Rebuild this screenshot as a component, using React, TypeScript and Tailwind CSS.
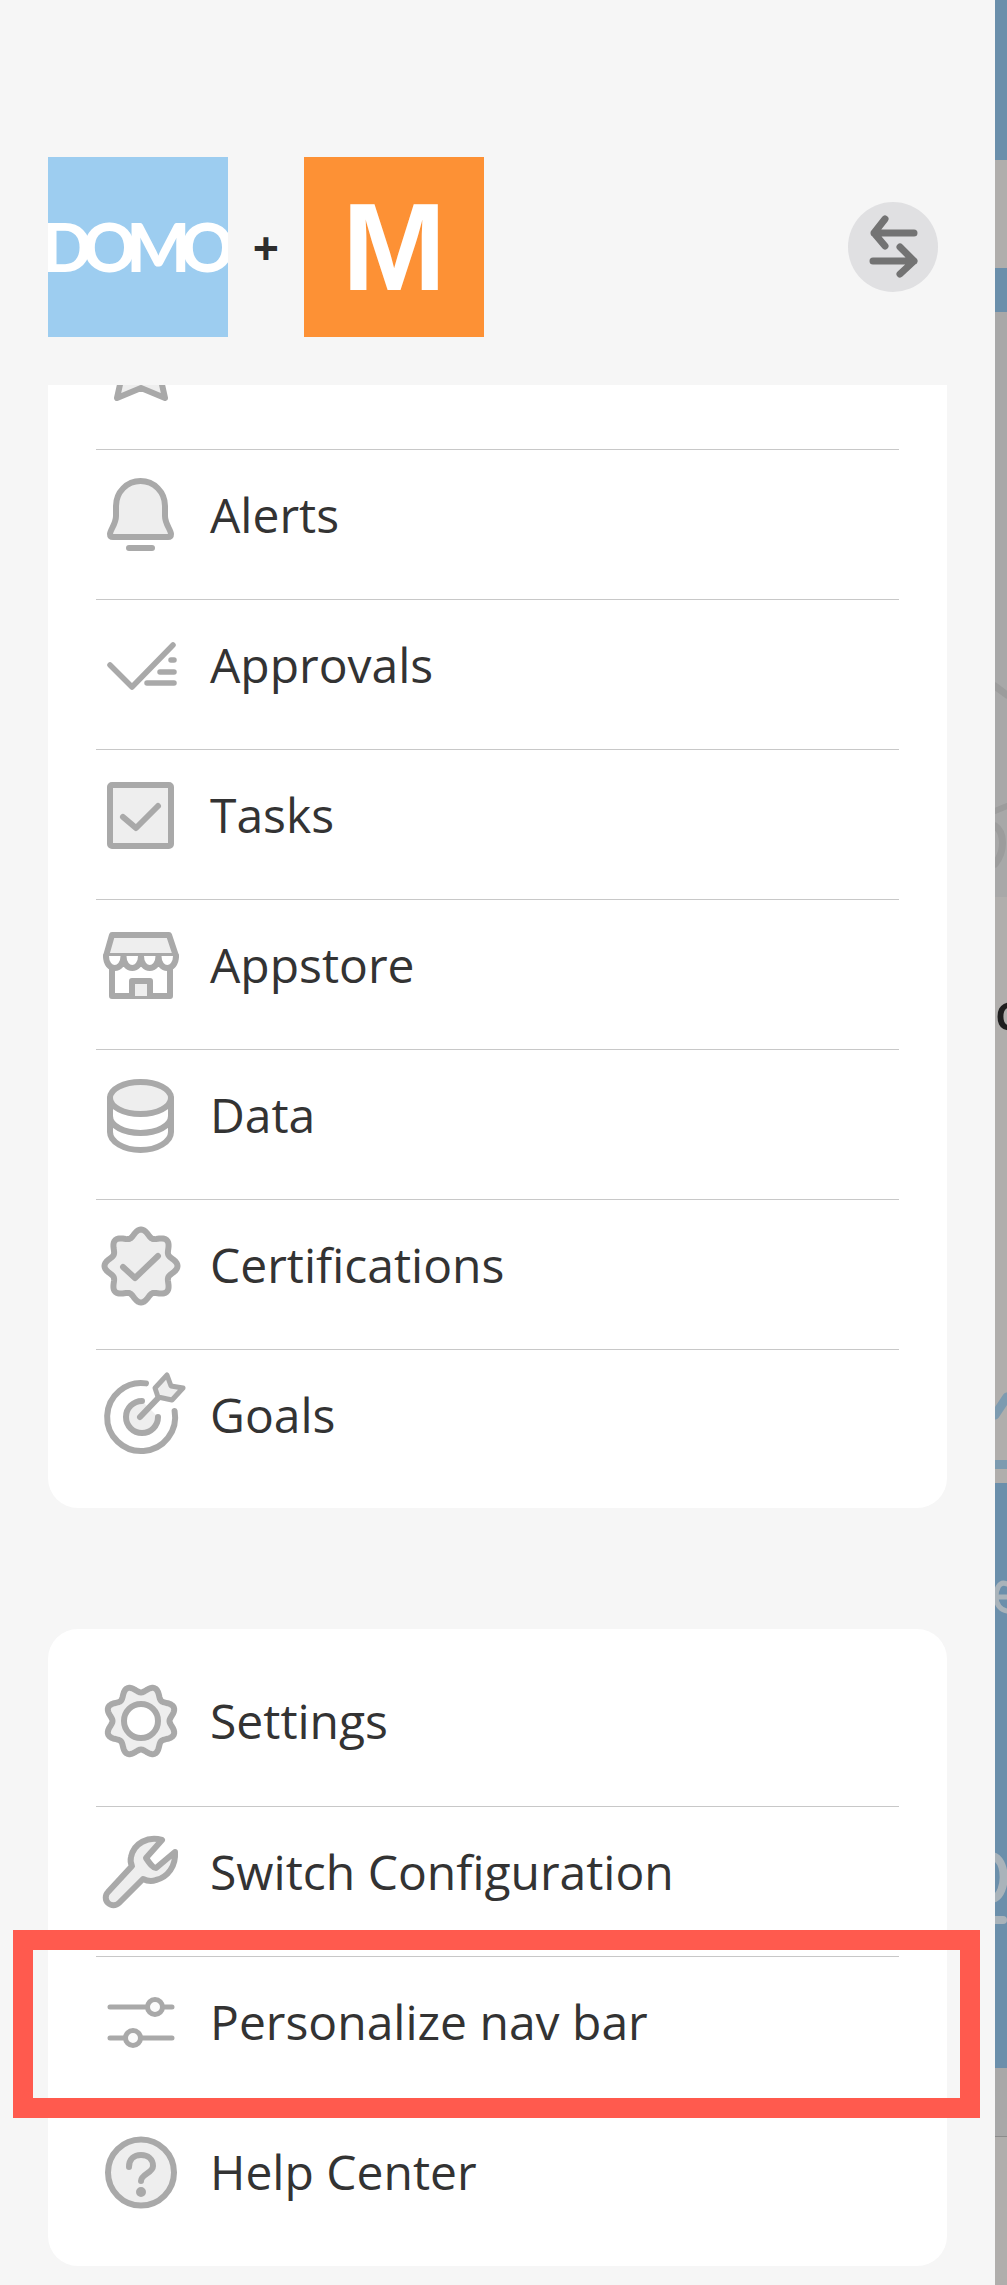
import React from "react";

// Icon drawings share one 90x90 box, centred on the row
const stroke = "#a9a9a9";
const fill = "#eeeeee";

const Icon = ({ children, width = 6 }: { children: React.ReactNode; width?: number }) => (
  <svg
    viewBox="0 0 90 90"
    className="w-[90px] h-[90px] shrink-0 overflow-visible"
    fill="none"
    stroke={stroke}
    strokeWidth={width}
    strokeLinecap="round"
    strokeLinejoin="round"
  >
    {children}
  </svg>
);

// wavy ring used by the badge and the gear
const wavyRing = (cx: number, cy: number, base: number, wave: number) => {
  const pts: string[] = [];
  for (let i = 0; i < 160; i++) {
    const t = (i / 160) * Math.PI * 2;
    const r = base + wave * Math.cos(8 * t);
    pts.push(`${(cx + r * Math.sin(t)).toFixed(2)} ${(cy - r * Math.cos(t)).toFixed(2)}`);
  }
  return `M${pts.join("L")}Z`;
};

const Star = () => (
  <Icon>
    <path d="M45 8L55 30L80 33L63 51L69 78L45 68L21 78L27 51L10 33L35 30Z" fill={fill} />
  </Icon>
);

const Bell = () => (
  <Icon>
    <path
      d="M20 36C20 22 31 11 44.5 11S69 22 69 36V46C69 54 75 60 75 64C75 66 74 67 72 67H17C15 67 14 66 14 64C14 60 20 54 20 46Z"
      fill={fill}
    />
    <path d="M33 78H56" />
  </Icon>
);

const Approvals = () => (
  <Icon width={5.5}>
    <path d="M14 45L36 67L77 25" />
    <path d="M75 40H78M64 52H78M51 63H78" />
  </Icon>
);

const Tasks = () => (
  <Icon>
    <rect x="14" y="15" width="61" height="61" rx="2" fill={fill} />
    <path d="M27 47L40 58L62 36" />
  </Icon>
);

const Appstore = () => (
  <Icon>
    <path d="M16 15H73L80 36H10Z" fill={fill} />
    <path
      d="M10 36C10 52 27.5 52 27.5 36C27.5 52 45 52 45 36C45 52 62.5 52 62.5 36C62.5 52 80 52 80 36"
      fill="#ffffff"
    />
    <path d="M16 49V76H74V49" />
    <path d="M36 76V61H54V76" fill={fill} />
  </Icon>
);

const Data = () => (
  <Icon>
    <path d="M14 28V62C14 72 28 80 44.5 80S75 72 75 62V28" />
    <ellipse cx="44.5" cy="28" rx="30.5" ry="16" fill={fill} />
    <path d="M14 46C14 56 28 63 44.5 63S75 56 75 46" />
  </Icon>
);

const Certifications = () => (
  <Icon>
    <path d={wavyRing(45, 46, 33, 3.5)} fill={fill} />
    <path d="M27 47L39 58L62 36" />
  </Icon>
);

const Goals = () => (
  <Icon>
    <path d="M50 13.4A34 34 0 1 0 78.6 41" />
    <path d="M46 31A16 16 0 1 0 62 47" fill={fill} />
    <path d="M44 47L66 24" />
    <path d="M59 18L71 5L75 16L87 18L76 30L62 27Z" fill={fill} strokeWidth={5} />
  </Icon>
);

const Settings = () => (
  <Icon>
    <path d={wavyRing(45, 45, 32, -3.5)} fill={fill} />
    <circle cx="45" cy="45" r="17" fill="#ffffff" />
  </Icon>
);

const Wrench = () => (
  <Icon>
    <path
      d="M66 13C52 9 38 16 35 30C34 34 35 37 36 39L12 65C9 68 9 73 12 76C15 79 20 79 23 76L47 52C51 54 55 55 60 53C72 50 80 39 79 25L60 41C57 41 54 37 50 31Z"
      fill={fill}
    />
  </Icon>
);

const Sliders = () => (
  <Icon width={5}>
    <path d="M14 30H51M67 30H76M14 61H29M45 61H76" />
    <circle cx="59" cy="30" r="7.5" fill="#fbfbfb" />
    <circle cx="37" cy="61" r="7.5" fill="#fbfbfb" />
  </Icon>
);

const Help = () => (
  <Icon>
    <circle cx="45" cy="45.5" r="33" fill={fill} />
    <path d="M33 40C33 32 38 28 45 28S57 32 57 39C57 46 45 47 45 54" />
    <circle cx="45" cy="65" r="2" fill={stroke} />
  </Icon>
);

const NavRow = ({ icon, label, divider = true }: { icon: React.ReactNode; label: string; divider?: boolean }) => (
  <div className={`mx-[48px] h-[150px] pt-[20px] flex items-start gap-[24px] ${divider ? "border-t border-[#c8c8c8]" : ""}`}>
    {icon}
    <span className="text-[48px] leading-[90px] text-[#333333]">{label}</span>
  </div>
);

export default function App() {
  return (
    <div className="relative flex h-[2285px] overflow-hidden font-['Open_Sans',sans-serif]">
      <div className="w-[995px] h-full bg-[#f6f6f6] flex flex-col">
        <header className="h-[385px] shrink-0 pt-[157px] pl-[48px] pr-[57px]">
          <div className="flex items-center">
            <div className="w-[180px] h-[180px] bg-[#9dcdf0] overflow-hidden flex items-center justify-center">
              <span className="font-['Lato',sans-serif] text-[67px] leading-none font-black text-white tracking-[-10px] whitespace-nowrap pb-[2px] pr-[10px]">DOMO</span>
            </div>
            <span className="w-[76px] text-center text-[46px] leading-none font-bold text-[#2d2d2d]">+</span>
            <div className="w-[180px] h-[180px] bg-[#fd9135] flex items-center justify-center">
              <span className="font-['Liberation_Sans',sans-serif] text-[125px] leading-none font-bold text-white pb-[2px]">M</span>
            </div>
            <button className="ml-auto w-[90px] h-[90px] rounded-full bg-[#e0e0e2] flex items-center justify-center">
              <svg viewBox="0 0 90 90" className="w-[90px] h-[90px]" fill="none" stroke="#737373" strokeWidth={7} strokeLinecap="round" strokeLinejoin="round">
                <path d="M66 31H26M37 17L26 31L37 44" />
                <path d="M25 59H66M52 45L66 59L52 72" />
              </svg>
            </button>
          </div>
        </header>

        <div className="flex-1 flex flex-col gap-[121px] px-[48px]">
          <section className="bg-white rounded-b-[30px] pb-[9px]">
            <div className="h-[64px] overflow-hidden mx-[48px]">
              <div className="-mt-[65px]"><Star /></div>
            </div>
            <NavRow icon={<Bell />} label="Alerts" />
            <NavRow icon={<Approvals />} label="Approvals" />
            <NavRow icon={<Tasks />} label="Tasks" />
            <NavRow icon={<Appstore />} label="Appstore" />
            <NavRow icon={<Data />} label="Data" />
            <NavRow icon={<Certifications />} label="Certifications" />
            <NavRow icon={<Goals />} label="Goals" />
          </section>

          <section className="bg-white rounded-[30px] pt-[27px] pb-[10px]">
            <NavRow icon={<Settings />} label="Settings" divider={false} />
            <NavRow icon={<Wrench />} label="Switch Configuration" />
            <NavRow icon={<Sliders />} label="Personalize nav bar" />
            <NavRow icon={<Help />} label="Help Center" />
          </section>
        </div>
      </div>

      {/* dimmed page behind the drawer */}
      <div className="relative w-[12px] h-full flex flex-col overflow-hidden">
        <div className="h-[160px] bg-[#6b8fab]" />
        <div className="h-[108px] bg-[#b0aeac]" />
        <div className="h-[44px] bg-[#6b8fab]" />
        <div className="h-[585px] bg-[#a8a8a8]" />
        <div className="h-[563px] bg-[#b0aeac]" />
        <div className="h-[9px] bg-[#7d9bb0]" />
        <div className="h-[14px] bg-[#b0aeac]" />
        <div className="h-[585px] bg-[#6b8fab]" />
        <div className="h-[69px] bg-[#a8a8a8] border-b border-[#8c8c8c]" />
        <div className="flex-1 bg-[#b0aeac]" />
        <svg viewBox="0 0 12 2285" className="absolute inset-0 w-[12px] h-[2285px]" fill="none" strokeLinecap="round">
          <path d="M0 686L12 695" stroke="#9c9c9c" strokeWidth={7} />
          <path d="M0 811L12 806" stroke="#9c9c9c" strokeWidth={6} />
          <path d="M0 826C9 832 11 850 0 864" stroke="#9c9c9c" strokeWidth={7} />
          <path d="M0 1415L12 1397" stroke="#7d9bb0" strokeWidth={9} />
          <path d="M12 1584C4 1580 1 1590 1 1597C1 1605 6 1610 12 1611M1 1597H12" stroke="#a9b3ba" strokeWidth={5} />
          <path d="M0 1857C12 1864 11 1892 0 1898" stroke="#a9b3ba" strokeWidth={8} />
          <path d="M0 1920H8" stroke="#a9b3ba" strokeWidth={8} />
        </svg>
        <span className="absolute left-0 top-[986px] text-[50px] leading-none font-semibold text-[#1f1f1f]">c</span>
      </div>

      {/* highlight box */}
      <div className="absolute left-[13px] top-[1930px] w-[967px] h-[188px] border-[20px] border-[#ff5a4e]" />
    </div>
  );
}
